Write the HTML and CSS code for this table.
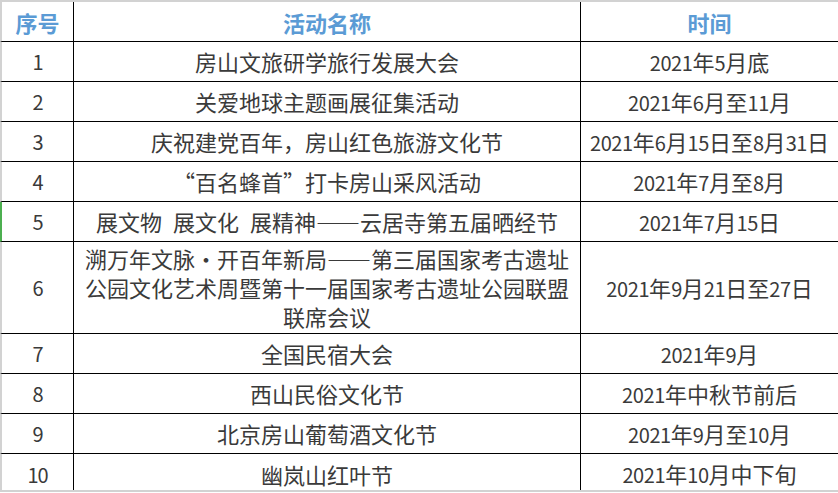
FILE: index.html
```html
<!DOCTYPE html>
<html lang="zh-CN">
<head>
<meta charset="utf-8">
<title>活动列表</title>
<link rel="stylesheet" href="styles.css">
</head>
<body>
<div class="sheet">
  <div class="cell no head">序号</div>
  <div class="cell name head">活动名称</div>
  <div class="cell date head">时间</div>

  <div class="cell no">1</div>
  <div class="cell name">房山文旅研学旅行发展大会</div>
  <div class="cell date"><span class="txt"><span class="n">2021</span>年<span class="n">5</span>月底</span></div>

  <div class="cell no">2</div>
  <div class="cell name">关爱地球主题画展征集活动</div>
  <div class="cell date"><span class="txt"><span class="n">2021</span>年<span class="n">6</span>月至<span class="n">11</span>月</span></div>

  <div class="cell no">3</div>
  <div class="cell name">庆祝建党百年，房山红色旅游文化节</div>
  <div class="cell date"><span class="txt"><span class="n">2021</span>年<span class="n">6</span>月<span class="n">15</span>日至<span class="n">8</span>月<span class="n">31</span>日</span></div>

  <div class="cell no">4</div>
  <div class="cell name">“百名蜂首”打卡房山采风活动</div>
  <div class="cell date"><span class="txt"><span class="n">2021</span>年<span class="n">7</span>月至<span class="n">8</span>月</span></div>

  <div class="cell no selected">5</div>
  <div class="cell name">展文物&ensp;展文化&ensp;展精神——云居寺第五届晒经节</div>
  <div class="cell date"><span class="txt"><span class="n">2021</span>年<span class="n">7</span>月<span class="n">15</span>日</span></div>

  <div class="cell no tall">6</div>
  <div class="cell name tall"><span class="txt">溯万年文脉<span class="dot">·</span>开百年新局——第三届国家考古遗址<br>公园文化艺术周暨第十一届国家考古遗址公园联盟<br>联席会议</span></div>
  <div class="cell date tall"><span class="txt"><span class="n">2021</span>年<span class="n">9</span>月<span class="n">21</span>日至<span class="n">27</span>日</span></div>

  <div class="cell no">7</div>
  <div class="cell name">全国民宿大会</div>
  <div class="cell date"><span class="txt"><span class="n">2021</span>年<span class="n">9</span>月</span></div>

  <div class="cell no">8</div>
  <div class="cell name">西山民俗文化节</div>
  <div class="cell date"><span class="txt"><span class="n">2021</span>年中秋节前后</span></div>

  <div class="cell no">9</div>
  <div class="cell name">北京房山葡萄酒文化节</div>
  <div class="cell date"><span class="txt"><span class="n">2021</span>年<span class="n">9</span>月至<span class="n">10</span>月</span></div>

  <div class="cell no last">10</div>
  <div class="cell name last">幽岚山红叶节</div>
  <div class="cell date last"><span class="txt"><span class="n">2021</span>年<span class="n">10</span>月中下旬</span></div>
</div>
</body>
</html>
```
FILE: styles.css
```css
html, body {
  margin: 0;
  padding: 0;
  background: #ffffff;
}

.sheet {
  display: grid;
  grid-template-columns: 74px 507px 257px;
  width: 838px;
  border-top: 2px solid #d2d2d2;
  border-bottom: 2px solid #d2d2d2;
  font-family: "Noto Sans CJK SC", "Noto Sans", sans-serif;
  font-size: 22px;
  color: #3a3a3a;
}

.cell {
  box-sizing: border-box;
  height: 40px;
  display: flex;
  align-items: center;
  justify-content: center;
  text-align: center;
  border-bottom: 1px solid #000000;
  line-height: 29px;
  white-space: nowrap;
}

.txt {
  display: block;
}

.no {
  border-left: 2px solid #d2d2d2;
  border-right: 1px solid #000000;
  font-size: 20px;
  letter-spacing: -1px;
}

.name {
  border-right: 1px solid #000000;
}

.head {
  color: #5b9bd5;
  font-weight: 700;
  font-size: 22px;
  letter-spacing: 0;
  padding-top: 2px;
}

.selected {
  border-left-color: #4caf50;
}

.tall {
  height: 92px;
}

.last {
  height: 36px;
  border-bottom: none;
  padding-top: 4px;
}

.n {
  font-size: 20px;
  letter-spacing: -0.4px;
}

.dot {
  display: inline-block;
  width: 1em;
  text-align: center;
}
```
